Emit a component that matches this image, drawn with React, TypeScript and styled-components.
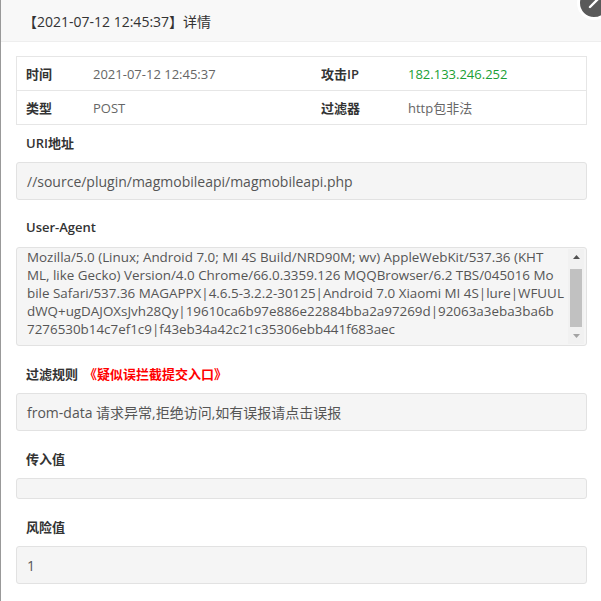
import React from 'react';
import styled, { createGlobalStyle } from 'styled-components';

const GlobalStyle = createGlobalStyle`
  html, body {
    margin: 0;
    padding: 0;
    background: #fff;
  }
  body {
    font-family: 'Open Sans', 'Noto Sans CJK SC', sans-serif;
    color: #333;
    overflow: hidden;
  }
`;

const Layer = styled.div`
  position: relative;
  width: 601px;
  height: 601px;
  border-left: 1px solid #999;
  box-sizing: border-box;
  background: #fff;
  overflow: hidden;
`;

const Header = styled.div`
  height: 41px;
  display: flex;
  align-items: center;
  padding-left: 22px;
  background: #f8f8f8;
  border-bottom: 1px solid #eee;
  font-size: 14px;
  color: #333;
`;

const CloseButton = styled.div`
  position: absolute;
  left: 576px;
  top: -14px;
  width: 28px;
  height: 28px;
  border-radius: 50%;
  background: #5a5a5a;
  border: 3px solid #fff;
  display: flex;
  align-items: center;
  justify-content: center;
`;

const Body = styled.div`
  padding: 14px 14px 0 15px;
`;

const InfoTable = styled.div`
  display: grid;
  grid-template-columns: 67px 228px 87px 1fr;
  border: 1px solid #e6e6e6;
`;

const Cell = styled.div<{ $label?: boolean; $green?: boolean; $last?: boolean }>`
  height: 33px;
  display: flex;
  align-items: center;
  padding-left: 9px;
  font-size: 13px;
  font-weight: ${(p) => (p.$label ? 600 : 400)};
  color: ${(p) => (p.$green ? '#1aa034' : p.$label ? '#333' : '#666')};
  border-bottom: ${(p) => (p.$last ? 'none' : '1px solid #e6e6e6')};
`;

const Section = styled.div<{ $first?: boolean }>`
  margin-top: ${(p) => (p.$first ? '7px' : '17px')};
`;

const Label = styled.div`
  height: 20px;
  display: flex;
  align-items: center;
  gap: 6px;
  padding-left: 10px;
  margin-bottom: 10px;
  font-size: 13px;
  font-weight: 600;
  color: #333;
`;

const Hint = styled.span`
  color: #ff0000;
  font-weight: 700;
`;

const ValueBox = styled.div<{ $height: number }>`
  box-sizing: border-box;
  height: ${(p) => p.$height}px;
  display: flex;
  align-items: center;
  padding: 0 10px;
  background: #f5f5f5;
  border: 1px solid #e2e2e2;
  border-radius: 3px;
  font-size: 14px;
  color: #555;
`;

const AgentBox = styled.div`
  box-sizing: border-box;
  height: 99px;
  display: flex;
  background: #f5f5f5;
  border: 1px solid #e2e2e2;
  border-radius: 3px;
`;

const AgentText = styled.div`
  flex: 1;
  padding: 0 0 0 10px;
  font-size: 13.4px;
  line-height: 18px;
  color: #555;
  white-space: nowrap;
  overflow: hidden;
`;

const AgentLine = styled.div`
  display: block;
`;

const Scrollbar = styled.div`
  width: 16px;
  margin: 1px 2px 1px 0;
  display: flex;
  flex-direction: column;
  align-items: center;
  background: #f1f1f1;
`;

const Arrow = styled.div`
  height: 16px;
  display: flex;
  align-items: center;
  justify-content: center;
`;

const Thumb = styled.div`
  width: 12px;
  height: 58px;
  margin-top: 4px;
  background: #c1c1c1;
`;

const Spacer = styled.div`
  flex: 1;
`;

const agentLines = [
  'Mozilla/5.0 (Linux; Android 7.0; MI 4S Build/NRD90M; wv) AppleWebKit/537.36 (KHT',
  'ML, like Gecko) Version/4.0 Chrome/66.0.3359.126 MQQBrowser/6.2 TBS/045016 Mo',
  'bile Safari/537.36 MAGAPPX|4.6.5-3.2.2-30125|Android 7.0 Xiaomi MI 4S|lure|WFUUL',
  'dWQ+ugDAJOXsJvh28Qy|19610ca6b97e886e22884bba2a97269d|92063a3eba3ba6b',
  '7276530b14c7ef1c9|f43eb34a42c21c35306ebb441f683aec',
];

function App(): JSX.Element {
  return (
    <>
      <GlobalStyle />
      <Layer>
        <Header>【2021-07-12 12:45:37】详情</Header>
        <CloseButton>
          <svg width="14" height="14" viewBox="0 0 14 14">
            <path d="M3 11 L11 3" stroke="#fff" strokeWidth="2.4" strokeLinecap="round" />
          </svg>
        </CloseButton>
        <Body>
          <InfoTable>
            <Cell $label>时间</Cell>
            <Cell>2021-07-12 12:45:37</Cell>
            <Cell $label>攻击IP</Cell>
            <Cell $green>182.133.246.252</Cell>
            <Cell $label $last>类型</Cell>
            <Cell $last>POST</Cell>
            <Cell $label $last>过滤器</Cell>
            <Cell $last>http包非法</Cell>
          </InfoTable>

          <Section $first>
            <Label>URI地址</Label>
            <ValueBox $height={38}>//source/plugin/magmobileapi/magmobileapi.php</ValueBox>
          </Section>

          <Section>
            <Label>User-Agent</Label>
            <AgentBox>
              <AgentText>
                {agentLines.map((line) => (
                  <AgentLine key={line}>{line}</AgentLine>
                ))}
              </AgentText>
              <Scrollbar>
                <Arrow>
                  <svg width="7" height="4" viewBox="0 0 7 4">
                    <path d="M0 4 L3.5 0 L7 4 Z" fill="#505050" />
                  </svg>
                </Arrow>
                <Thumb />
                <Spacer />
                <Arrow>
                  <svg width="7" height="4" viewBox="0 0 7 4">
                    <path d="M0 0 L3.5 4 L7 0 Z" fill="#a3a3a3" />
                  </svg>
                </Arrow>
              </Scrollbar>
            </AgentBox>
          </Section>

          <Section>
            <Label>
              过滤规则<Hint>《疑似误拦截提交入口》</Hint>
            </Label>
            <ValueBox $height={38}>from-data 请求异常,拒绝访问,如有误报请点击误报</ValueBox>
          </Section>

          <Section>
            <Label>传入值</Label>
            <ValueBox $height={21} />
          </Section>

          <Section>
            <Label>风险值</Label>
            <ValueBox $height={38}>1</ValueBox>
          </Section>
        </Body>
      </Layer>
    </>
  );
}

export default App;
